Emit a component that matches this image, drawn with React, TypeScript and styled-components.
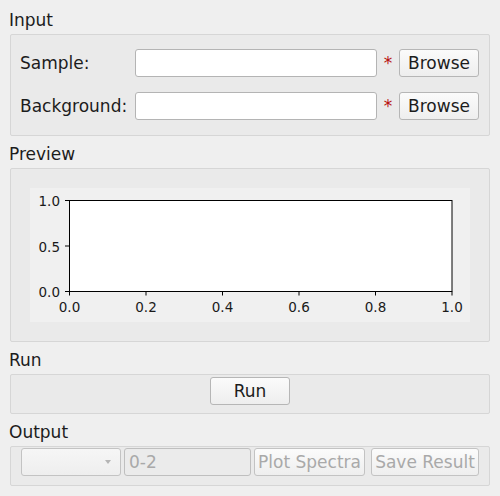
import React from 'react'
import styled, { createGlobalStyle } from 'styled-components'

const GlobalStyle = createGlobalStyle`
  html, body {
    margin: 0;
    padding: 0;
    background: #efefef;
    overflow: hidden;
  }
  body {
    font-family: 'DejaVu Sans', 'Liberation Sans', sans-serif;
    font-size: 17px;
    color: #1c1c1c;
  }
`

const Page = styled.div`
  width: 500px;
  height: 496px;
  box-sizing: border-box;
  padding: 10px 10px 0 10px;
  display: flex;
  flex-direction: column;
`

const Title = styled.div<{ $first?: boolean }>`
  height: 20px;
  line-height: 20px;
  margin: ${({ $first }) => ($first ? '0' : '8px')} 0 4px -1px;
`

const Group = styled.div<{ $pad: string }>`
  width: 480px;
  box-sizing: border-box;
  border: 1px solid #d6d6d6;
  border-radius: 2px;
  background: #eaeaea;
  padding: ${({ $pad }) => $pad};
`

const FormGrid = styled.div`
  display: grid;
  grid-template-columns: 115px 242px 22px 80px;
  grid-auto-rows: 28px;
  row-gap: 15px;
  align-items: center;
`

const FieldLabel = styled.label`
  line-height: 28px;
  white-space: nowrap;
`

const TextInput = styled.input`
  box-sizing: border-box;
  width: 100%;
  height: 28px;
  margin: 0;
  border: 1px solid #b4b4b4;
  border-radius: 3px;
  background: #ffffff;
  outline: none;
  font: inherit;
  padding: 0 4px;
`

const Required = styled.span`
  color: #b80f0f;
  text-align: center;
  font-size: 17px;
  line-height: 28px;
`

const Button = styled.button<{ $w: number }>`
  box-sizing: border-box;
  width: ${({ $w }) => $w}px;
  height: 28px;
  margin: 0;
  padding: 0;
  border: 1px solid #b6b6b6;
  border-radius: 3px;
  background: linear-gradient(#fbfbfb, #eeeeee);
  font: inherit;
  color: #1c1c1c;
  white-space: nowrap;
  overflow: hidden;
  &:disabled {
    color: #a9a9a9;
    border-color: #c3c3c3;
  }
`

const Canvas = styled.div`
  width: 440px;
  height: 134px;
  background: #f0f0f0;
`

const Centered = styled.div`
  display: flex;
  justify-content: center;
`

const OutputRow = styled.div`
  display: flex;
  align-items: center;
`

const Combo = styled.div`
  box-sizing: border-box;
  width: 100px;
  height: 28px;
  border: 1px solid #c3c3c3;
  border-radius: 3px;
  background: linear-gradient(#f6f6f6, #eeeeee);
  display: flex;
  align-items: center;
  justify-content: flex-end;
  padding-right: 9px;
`

const Arrow = styled.span`
  width: 0;
  height: 0;
  border-left: 3.5px solid transparent;
  border-right: 3.5px solid transparent;
  border-top: 4px solid #b5b5b5;
`

const DisabledInput = styled.input`
  box-sizing: border-box;
  width: 127px;
  height: 28px;
  margin: 0 3px;
  border: 1px solid #bfbfbf;
  border-radius: 3px;
  background: #ebebeb;
  color: #a9a9a9;
  font: inherit;
  padding: 0 4px;
  outline: none;
`

const Gap = styled.div<{ $w: number }>`
  width: ${({ $w }) => $w}px;
  flex: none;
`

const xTicks = [0, 0.2, 0.4, 0.6, 0.8, 1.0]
const yTicks = [
  { v: '1.0', y: 12.5, base: 18 },
  { v: '0.5', y: 58, base: 63.5 },
  { v: '0.0', y: 103.5, base: 109 },
]

function EmptyPlot() {
  return (
    <svg width="440" height="134" viewBox="0 0 440 134">
      <rect x="39.5" y="12.5" width="382.5" height="91" fill="#ffffff" stroke="#000" strokeWidth="1" />
      {xTicks.map(t => {
        const x = 39.5 + 382.5 * t
        return (
          <g key={t}>
            <line x1={x} y1={103.5} x2={x} y2={107.5} stroke="#000" strokeWidth="1" />
            <text
              x={x}
              y={124}
              textAnchor="middle"
              fontFamily="'DejaVu Sans', sans-serif"
              fontSize="13.5"
              fill="#1a1a1a"
            >
              {t.toFixed(1)}
            </text>
          </g>
        )
      })}
      {yTicks.map(t => (
        <g key={t.v}>
          <line x1={35} y1={t.y} x2={39.5} y2={t.y} stroke="#000" strokeWidth="1" />
          <text
            x={30}
            y={t.base}
            textAnchor="end"
            fontFamily="'DejaVu Sans', sans-serif"
            fontSize="13.5"
            fill="#1a1a1a"
          >
            {t.v}
          </text>
        </g>
      ))}
    </svg>
  )
}

export default function App() {
  return (
    <>
      <GlobalStyle />
      <Page>
        <Title $first>Input</Title>
        <Group $pad="14px 10px 15px 9px">
          <FormGrid>
            <FieldLabel>Sample:</FieldLabel>
            <TextInput />
            <Required>*</Required>
            <Button $w={80}>Browse</Button>
            <FieldLabel>Background:</FieldLabel>
            <TextInput />
            <Required>*</Required>
            <Button $w={80}>Browse</Button>
          </FormGrid>
        </Group>

        <Title>Preview</Title>
        <Group $pad="19px">
          <Canvas>
            <EmptyPlot />
          </Canvas>
        </Group>

        <Title>Run</Title>
        <Group $pad="2px 10px 8px">
          <Centered>
            <Button $w={80}>Run</Button>
          </Centered>
        </Group>

        <Title>Output</Title>
        <Group $pad="1px 10px 9px">
          <OutputRow>
            <Combo>
              <Arrow />
            </Combo>
            <DisabledInput disabled value="0-2" readOnly />
            <Button $w={111} disabled>Plot Spectra</Button>
            <Gap $w={6} />
            <Button $w={108} disabled>Save Result</Button>
          </OutputRow>
        </Group>
      </Page>
    </>
  )
}
